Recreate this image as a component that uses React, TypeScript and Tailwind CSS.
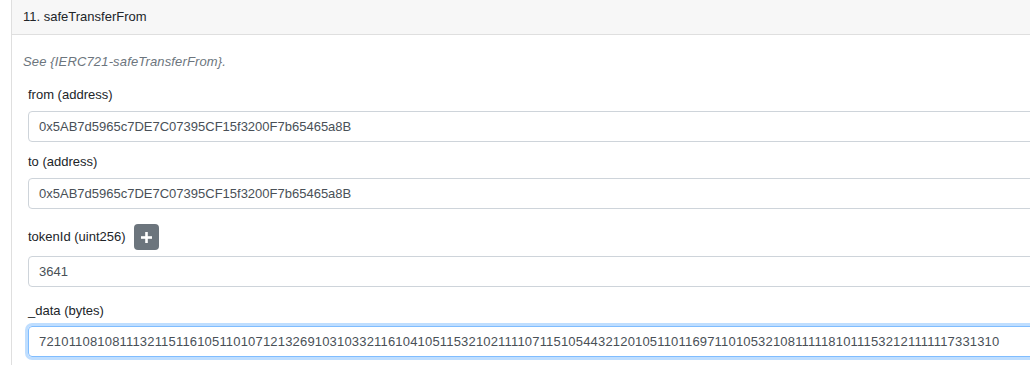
const ADDRESS = '0x5AB7d5965c7DE7C07395CF15f3200F7b65465a8B'
const DATA =
  '7210110810811132115116105110107121326910310332116104105115321021111071151054432120105110116971101053210811111810111532121111117331310'

function Field({ value, focused }: { value: string; focused?: boolean }) {
  return (
    <div
      className={
        focused
          ? 'h-[31px] w-full flex items-center px-[10px] rounded-[4px] border border-[#80bdff] shadow-[0_0_0_3px_rgba(0,123,255,0.25)] text-[#495057] tracking-[0.18px] whitespace-nowrap overflow-hidden'
          : 'h-[31px] w-full flex items-center px-[10px] rounded-[4px] border border-[#ced4da] text-[#495057] whitespace-nowrap overflow-hidden'
      }
    >
      {value}
    </div>
  )
}

function PlusButton() {
  return (
    <div className="w-[25px] h-[26px] rounded-[4px] bg-[#6c757d] flex items-center justify-center">
      <svg width="11" height="11" viewBox="0 0 11 11">
        <rect x="4.2" y="0" width="2.6" height="11" fill="#fff" />
        <rect x="0" y="4.2" width="11" height="2.6" fill="#fff" />
      </svg>
    </div>
  )
}

export default function App() {
  return (
    <div className="w-[1030px] h-[365px] overflow-hidden bg-white font-['Liberation_Sans',Arial,sans-serif] text-[13px] leading-[20px] text-[#212529]">
      <div className="ml-[11px] w-[1100px] h-[400px] border-l border-r border-[#dfdfdf]">
        {/* header */}
        <div className="h-[35px] bg-[#f7f7f7] border-b border-[#dfdfdf] flex items-center pl-[11px]">
          11. safeTransferFrom
        </div>

        <div className="pt-[17px] pl-[11px] pr-[16px]">
          <p className="italic text-[#6c757d] tracking-[0.15px]">See {'{IERC721-safeTransferFrom}'}.</p>

          <div className="pl-[5px]">
            <div className="mt-[13px] mb-[6px]">from (address)</div>
            <Field value={ADDRESS} />

            <div className="mt-[10px] mb-[6px]">to (address)</div>
            <Field value={ADDRESS} />

            <div className="mt-[15px] mb-[6px] flex items-center gap-[8px] h-[26px]">
              <span>tokenId (uint256)</span>
              <PlusButton />
            </div>
            <Field value="3641" />

            <div className="mt-[14px] mb-[5px]">_data (bytes)</div>
            <Field value={DATA} focused />
          </div>
        </div>
      </div>
    </div>
  )
}
